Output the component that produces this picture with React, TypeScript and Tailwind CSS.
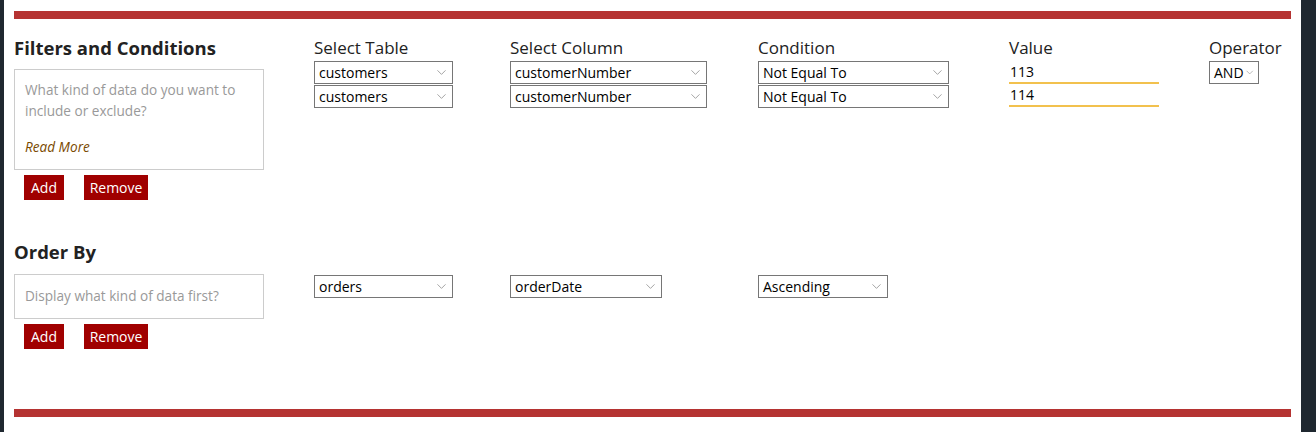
import { ChevronDown } from "lucide-react";

const font = { fontFamily: '"Open Sans", "DejaVu Sans", sans-serif' };

function Select({ value, width }: { value: string; width: string }) {
  return (
    <div
      className={`flex h-[23px] items-center justify-between border border-[#767676] bg-white pl-[4px] pr-[3px] text-[14px] leading-none text-black ${width}`}
    >
      <span>{value}</span>
      <ChevronDown className="h-[15px] w-[15px] text-[#8f8f8f]" strokeWidth={1.3} />
    </div>
  );
}

function ValueInput({ value }: { value: string }) {
  return (
    <div className="flex h-[22px] w-[150px] items-center border-b-2 border-[#f2c14e] pl-[1px] text-[14px] leading-none text-black">
      {value}
    </div>
  );
}

function Buttons() {
  return (
    <div className="mt-[5px] flex gap-[20px] pl-[10px]">
      <button className="h-[25px] w-[40px] bg-[#a00000] text-[14px] text-white">Add</button>
      <button className="h-[25px] w-[64px] bg-[#a00000] text-[14px] text-white">Remove</button>
    </div>
  );
}

function Header({ children }: { children: string }) {
  return <div className="h-[22px] text-[17px] leading-[20px] text-[#222]">{children}</div>;
}

export default function App() {
  return (
    <div className="flex h-[432px] w-full bg-[#1f2830] pl-[4px] pr-[15px]" style={font}>
      <div className="flex flex-1 flex-col bg-white px-[10px] pt-[11px]">
        <div className="h-[8px] w-full bg-[#b53332]" />

        {/* filters */}
        <div className="mt-[19px] flex">
          <div className="w-[300px]">
            <h2 className="h-[26px] text-[18.5px] font-bold leading-[20px] text-[#222]">
              Filters and Conditions
            </h2>
            <div className="mt-[5px] h-[101px] w-[250px] border border-[#cccccc] px-[10px] pt-[9px] text-[13.6px] leading-[21px]">
              <p className="text-[#999]">What kind of data do you want to include or exclude?</p>
              <p className="mt-[15px] italic text-[#7a4a00]">Read More</p>
            </div>
            <Buttons />
          </div>
          <div className="w-[196px]">
            <Header>Select Table</Header>
            <div className="mt-[1px] flex flex-col gap-[1px]">
              <Select value="customers" width="w-[139px]" />
              <Select value="customers" width="w-[139px]" />
            </div>
          </div>
          <div className="w-[248px]">
            <Header>Select Column</Header>
            <div className="mt-[1px] flex flex-col gap-[1px]">
              <Select value="customerNumber" width="w-[197px]" />
              <Select value="customerNumber" width="w-[197px]" />
            </div>
          </div>
          <div className="w-[251px]">
            <Header>Condition</Header>
            <div className="mt-[1px] flex flex-col gap-[1px]">
              <Select value="Not Equal To" width="w-[191px]" />
              <Select value="Not Equal To" width="w-[191px]" />
            </div>
          </div>
          <div className="w-[200px]">
            <Header>Value</Header>
            <div className="mt-[2px] flex flex-col gap-[1px]">
              <ValueInput value="113" />
              <ValueInput value="114" />
            </div>
          </div>
          <div>
            <Header>Operator</Header>
            <div className="mt-[1px]">
              <Select value="AND" width="w-[50px] pl-[3px] pr-[1px]" />
            </div>
          </div>
        </div>

        {/* order by */}
        <div className="mt-[42px] flex">
          <div className="w-[300px]">
            <h2 className="h-[26px] text-[18.5px] font-bold leading-[20px] text-[#222]">Order By</h2>
            <div className="mt-[6px] h-[45px] w-[250px] border border-[#cccccc] px-[10px] pt-[10px] text-[13.6px] leading-[21px] text-[#999]">
              Display what kind of data first?
            </div>
            <Buttons />
          </div>
          <div className="w-[196px] pt-[33px]">
            <Select value="orders" width="w-[139px]" />
          </div>
          <div className="w-[248px] pt-[33px]">
            <Select value="orderDate" width="w-[152px]" />
          </div>
          <div className="pt-[33px]">
            <Select value="Ascending" width="w-[130px]" />
          </div>
        </div>

        <div className="mt-[60px] h-[8px] w-full bg-[#b53332]" />
      </div>
    </div>
  );
}
